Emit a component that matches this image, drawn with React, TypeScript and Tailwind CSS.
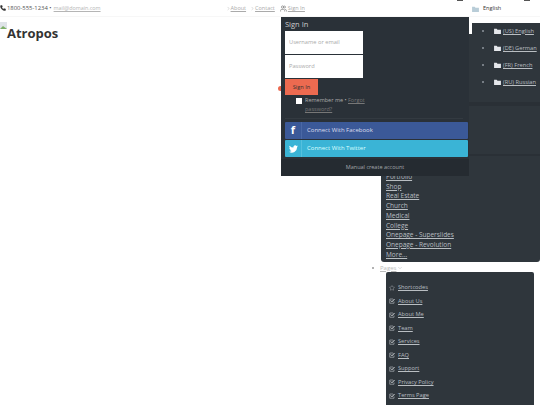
import { ChevronDown, ChevronRight, Phone, Star, Users } from "lucide-react";

const languages = ["(US) English", "(DE) German", "(FR) French", "(RU) Russian"];
const demos = ["Portfolio", "Shop", "Real Estate", "Church", "Medical", "College", "Onepage - Superslides", "Onepage - Revolution", "More..."];
const pages = ["About Us", "About Me", "Team", "Services", "FAQ", "Support", "Privacy Policy", "Terms Page"];

const Flag = ({ color = "#e5e7eb" }: { color?: string }) => (
  <svg width="7" height="6" viewBox="0 0 8 7" className="shrink-0">
    <path d="M0 1h3l1 1h4v5H0z" fill={color} />
  </svg>
);

const CheckIcon = () => (
  <svg width="6" height="6" viewBox="0 0 12 12" fill="none" className="ml-[3px] shrink-0">
    <path d="M10 7v3.500H1.500V2H8" stroke="#a9aeb3" strokeWidth="1.400" />
    <path d="M3.500 5l2.500 2.500L11 2" stroke="#d5d8db" strokeWidth="2" />
  </svg>
);

const App = () => {
  return (
    <div className="relative w-[540px] h-[405px] overflow-hidden bg-white text-[#555] font-['Open_Sans',sans-serif] text-[5.5px]">
      <div className="flex items-center h-[17px] border-b border-[#f7f7f7]">
        <Phone size={6} className="fill-[#333] text-[#333]" />
        <span className="ml-[1px] text-[5.9px]">1800-555-1234 •</span>
        <span className="ml-[2px] underline text-[#b5b5b5] text-[5.4px]">mail@domain.com</span>
        <div className="flex items-center ml-[125px] text-[#aaa]">
          <ChevronRight size={5} />
          <span className="underline">About</span>
          <ChevronRight size={5} className="ml-[4px]" />
          <span className="underline">Contact</span>
          <Users size={7} className="ml-[5px] text-[#666]" />
          <span className="underline ml-[1px]">Sign In</span>
        </div>
      </div>

      <div className="flex items-start mt-[5px]">
        <svg width="7" height="7" viewBox="0 0 7 7" className="shrink-0">
          <rect width="7" height="7" fill="#dfe3e8" />
          <path d="M0 7l3-3 4 3z" fill="#7fb069" />
        </svg>
        <h1 className="text-[13px] leading-[20px] mt-[1px] font-bold text-[#333]">Atropos</h1>
      </div>

      {/* language menu */}
      <div className="absolute left-[457px] top-0 w-[6px] h-[1px] bg-[#555]" />
      <div className="absolute left-[524px] top-0 w-[6px] h-[1px] bg-[#555]" />
      <div className="absolute left-[472px] top-[2px] flex items-center text-[#333] h-[13px]">
        <Flag color="#b9cdd8" />
        <span className="ml-[4px]">English</span>
      </div>

      {/* dark column behind the menus */}
      <div className="absolute left-[381px] top-[17px] w-[159px] h-[245px] bg-[#2f363c] rounded-b-[3px] text-[#b9bec2]">
        <div className="absolute left-[88px] top-0 w-[71px] h-[6px] bg-white" />
        <div className="absolute left-[88px] top-[6px] w-[3px] h-[11px] bg-white" />
        <ul className="absolute left-[88px] top-[8.5px] w-[71px] flex flex-col gap-[6px] text-[5.7px]">
          {languages.map((l) => (
            <li key={l} className="flex items-center h-[11px]">
              <span className="ml-[13px] w-[2px] h-[2px] rounded-full bg-[#8f969c]" />
              <span className="ml-[10px]"><Flag /></span>
              <span className="ml-[2px] underline whitespace-nowrap">{l}</span>
            </li>
          ))}
        </ul>
        <div className="absolute left-[88px] top-[85px] w-[71px] h-[4px] bg-[#2a3036]" />
        <div className="absolute left-[88px] top-[137px] w-[71px] h-[2px] bg-[#2a3036]" />
        <ul className="absolute left-[5px] top-[155px] flex flex-col text-[6.5px] leading-[9.7px]">
          {demos.map((d) => (
            <li key={d} className="underline whitespace-nowrap">{d}</li>
          ))}
        </ul>
      </div>

      {/* pages */}
      <div className="absolute left-[372px] top-[263px] flex items-center h-[10px] text-[#bbb] text-[6px]">
        <span className="w-[2px] h-[2px] rounded-full bg-[#999]" />
        <span className="ml-[6px] underline">Pages</span>
        <ChevronDown size={6} className="ml-[1px]" />
      </div>
      <div className="absolute left-[386px] top-[272px] w-[148px] h-[133px] bg-[#2f363c] rounded-t-[2px] text-[#b9bec2] text-[5.7px] flex flex-col pt-[9px]">
        <div className="flex items-center h-[13.5px]">
          <Star size={6} className="ml-[3px] text-[#a0a5aa]" />
          <span className="ml-[3px] underline">Shortcodes</span>
        </div>
        {pages.map((p) => (
          <div key={p} className="flex items-center h-[13.5px]">
            <CheckIcon />
            <span className="ml-[3px] underline whitespace-nowrap">{p}</span>
          </div>
        ))}
      </div>

      {/* sign in panel */}
      <div className="absolute left-[281px] top-[17px] w-[188px] h-[159px] bg-[#2a3138] text-[#ccc] flex flex-col">
        <div className="text-[7.5px] leading-[12px] mt-[1px] ml-[4px]">Sign In</div>
        <div className="ml-[4px] w-[78px] h-[23px] mt-[1px] bg-white text-[#aaa] text-[5.7px] flex items-center pl-[4px]">Username or email</div>
        <div className="ml-[4px] w-[78px] h-[23px] mt-[1px] bg-white text-[#aaa] text-[5.7px] flex items-center pl-[4px]">Password</div>
        <div className="ml-[4px] w-[33px] h-[16px] mt-[1px] bg-[#ec6a50] text-[#333] text-[5.7px] flex items-center justify-center">Sign In</div>
        <div className="flex items-start ml-[15px] mt-[1px] w-[72px] text-[#aaa] leading-[9px] text-[5.5px]">
          <span className="w-[6px] h-[6px] bg-white mt-[2px] mr-[3px] shrink-0" />
          <span className="w-[63px]">
            Remember me • <span className="underline text-[#777]">Forgot password?</span>
          </span>
        </div>
        <div className="h-[1px] bg-[#333a41] mx-[4px] mt-[4px] w-[178px]" />
        <div className="flex items-center ml-[4px] mt-[3px] w-[183px] h-[17px] bg-[#3b5998] rounded-[1px] text-[#dde] text-[6px]">
          <span className="w-[17px] h-[17px] flex items-center justify-center border-r border-[#4a68a5] text-white font-bold text-[11px]">f</span>
          <span className="ml-[5px]">Connect With Facebook</span>
        </div>
        <div className="flex items-center ml-[4px] mt-[1px] w-[183px] h-[17px] bg-[#3ab4d6] rounded-[1px] text-[#dff] text-[6px]">
          <span className="w-[17px] h-[17px] flex items-center justify-center border-r border-[#55c0de]">
            <svg width="9" height="8" viewBox="0 0 24 20" fill="white">
              <path d="M24 2.4a10 10 0 0 1-2.8.8 5 5 0 0 0 2.2-2.7 10 10 0 0 1-3.1 1.2 4.9 4.9 0 0 0-8.400 4.500A14 14 0 0 1 1.700 1a4.900 4.900 0 0 0 1.500 6.600 5 5 0 0 1-2.200-.6 4.900 4.900 0 0 0 3.900 4.900 5 5 0 0 1-2.200.1 4.900 4.900 0 0 0 4.600 3.400A10 10 0 0 1 0 17.400 14 14 0 0 0 21.500 5a10 10 0 0 0 2.500-2.600z" />
            </svg>
          </span>
          <span className="ml-[5px]">Connect With Twitter</span>
        </div>
        <div className="mt-[2px] flex-1 bg-[#252b31] text-center text-[#a3a7ab] leading-[17px] text-[5.5px]">Manual create account</div>
      </div>
      <div className="absolute left-[278px] top-[86px] w-[3px] h-[5px] rounded-l-full bg-[#ec6a50]" />
    </div>
  );
};

export default App;
